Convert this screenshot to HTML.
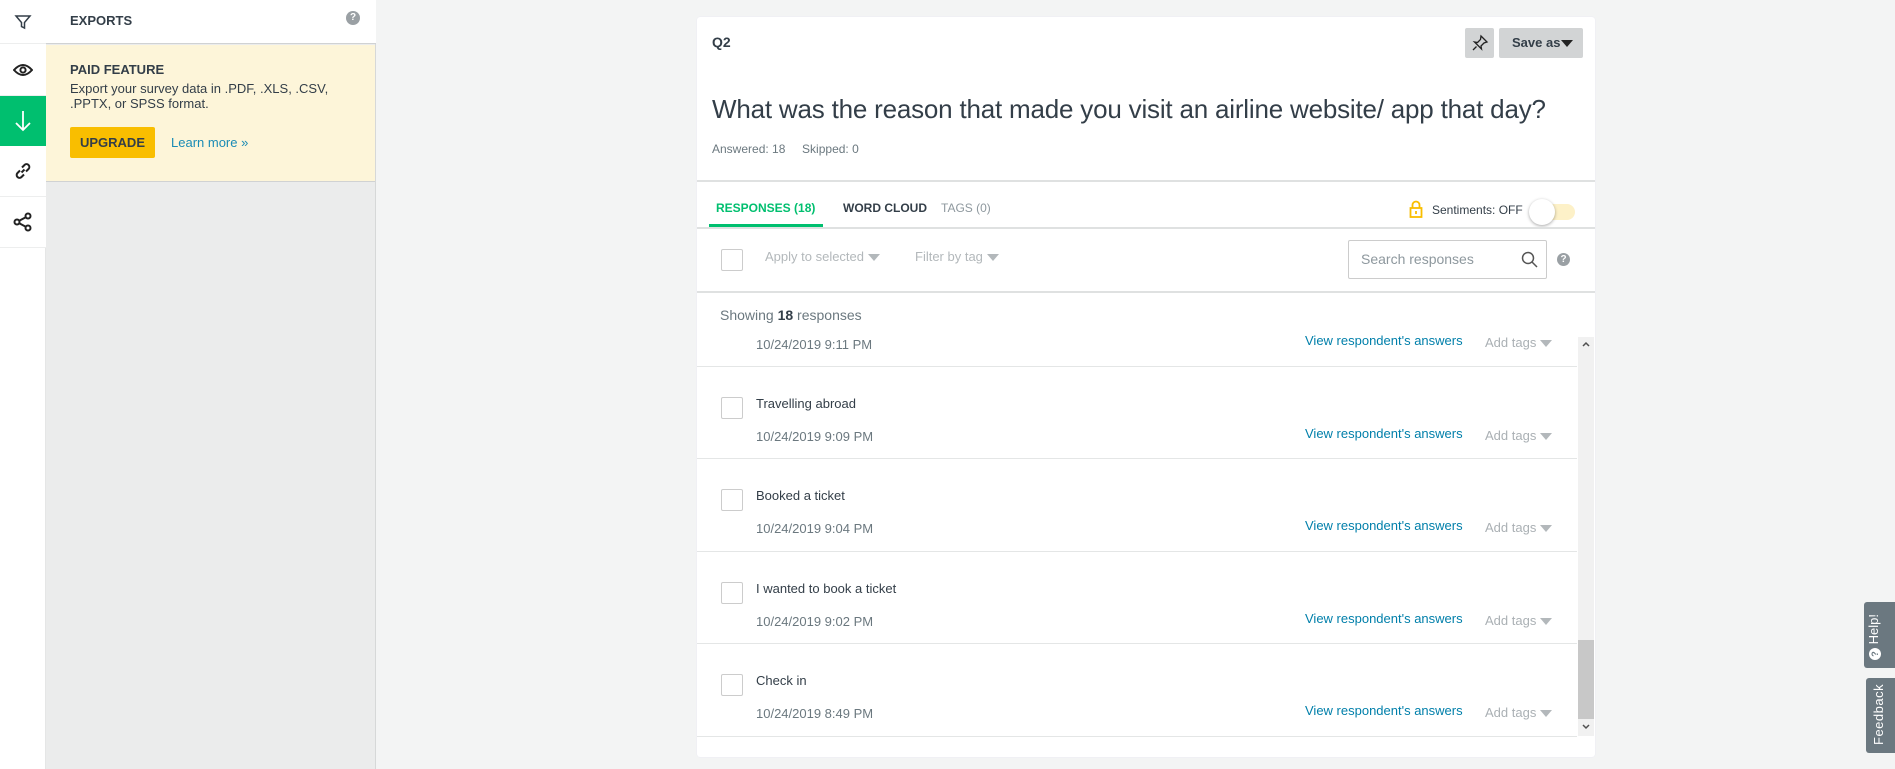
<!DOCTYPE html>
<html><head><meta charset="utf-8"><style>
*{margin:0;padding:0;box-sizing:border-box}
body{width:1895px;height:769px;overflow:hidden;background:#f3f4f4;font-family:"Liberation Sans",sans-serif;color:#333e48;position:relative}
.a{position:absolute}
.ib{position:absolute;left:0;width:46px;background:#fff;border-bottom:1px solid #edeeee;display:flex;align-items:center;justify-content:center}
.sep{position:absolute;left:697px;width:880px;height:1px;background:#e4e6e6}
.cb{position:absolute;width:22px;height:22px;border:1px solid #ccc;border-radius:2px;background:#fff}
.txt{position:absolute;left:756px;font-size:13px;color:#333e48}
.dt{position:absolute;left:756px;font-size:13px;color:#6b787f}
.vr{position:absolute;left:1305px;font-size:13px;color:#007faa}
.at{position:absolute;left:1485px;font-size:13px;color:#aab0b4}
.tri{display:inline-block;width:0;height:0;border-left:6px solid transparent;border-right:6px solid transparent;border-top:7px solid #b3b8bb;vertical-align:middle;margin-left:4px}
</style></head><body>
<div class="a" style="left:0;top:0;width:46px;height:769px;background:#fff;border-right:1px solid #e5e6e6"></div>
<div class="ib" style="top:0;height:44px"><svg width="18" height="18" viewBox="0 0 18 18" fill="none" stroke="#333e48" stroke-width="1.5"><path d="M2 3h14l-5.5 6.5V15l-3-1.5V9.5z"/></svg></div>
<div class="ib" style="top:44px;height:52px"><svg width="20" height="14" viewBox="0 0 20 14" fill="none" stroke="#222" stroke-width="2"><path d="M1 7Q10 -3 19 7Q10 17 1 7z"/><circle cx="10" cy="7" r="2.6"/></svg></div>
<div class="ib" style="top:96px;height:50px;background:#00bf6f;border:none"><svg width="18" height="22" viewBox="0 0 18 22" fill="none" stroke="#fff" stroke-width="1.8"><path d="M9 1v19M2 13l7 7 7-7"/></svg></div>
<div class="ib" style="top:146px;height:51px"><svg width="20" height="20" viewBox="0 0 20 20" fill="none" stroke="#222" stroke-width="2"><path d="M8.5 11.5l3-3"/><path d="M7 9.5L4.5 12a2.8 2.8 0 0 0 4 4L11 13.5"/><path d="M9 6.5L11.5 4a2.8 2.8 0 0 1 4 4L13 10.5"/></svg></div>
<div class="ib" style="top:197px;height:51px"><svg width="20" height="20" viewBox="0 0 20 20" fill="none" stroke="#222" stroke-width="2"><circle cx="4" cy="10" r="2.5"/><circle cx="15" cy="4" r="2.5"/><circle cx="15" cy="16" r="2.5"/><path d="M6.2 8.8l6.6-3.6M6.2 11.2l6.6 3.6"/></svg></div>
<div class="a" style="left:46px;top:0;width:330px;height:769px;background:#ebecec;border-right:1px solid #d6d8d8"></div>
<div class="a" style="left:46px;top:0;width:330px;height:44px;background:#fff;border-bottom:1px solid #d0d2d3"></div>
<div class="a" style="left:70px;top:13px;font-size:13px;font-weight:bold;color:#333e48">EXPORTS</div>
<div class="a" style="left:346px;top:11px;width:14px;height:14px;border-radius:50%;background:#9aa0a4;color:#fff;font-size:10px;font-weight:bold;text-align:center;line-height:14px">?</div>
<div class="a" style="left:46px;top:45px;width:329px;height:137px;background:#fdf5d9;border-bottom:1px solid #d0d2d3"></div>
<div class="a" style="left:70px;top:62px;font-size:13px;font-weight:bold">PAID FEATURE</div>
<div class="a" style="left:70px;top:81px;font-size:13px;line-height:15px;width:270px">Export your survey data in .PDF, .XLS, .CSV, .PPTX, or SPSS format.</div>
<div class="a" style="left:70px;top:127px;width:85px;height:31px;background:#f9be00;border-radius:2px;font-size:13px;font-weight:bold;text-align:center;line-height:31px">UPGRADE</div>
<div class="a" style="left:171px;top:135px;font-size:13px;color:#1a8bb5">Learn more »</div>
<div class="a" style="left:697px;top:17px;width:898px;height:740px;background:#fff;border-radius:3px;box-shadow:0 0 1px #dde"></div>
<div class="a" style="left:712px;top:34px;font-size:14px;font-weight:bold">Q2</div>
<div class="a" style="left:1465px;top:28px;width:29px;height:30px;background:#d2d4d5;border-radius:2px;display:flex;align-items:center;justify-content:center"><svg width="18" height="18" viewBox="0 0 18 18" fill="none" stroke="#222" stroke-width="1.3"><path d="M10 2l6 6-3 1-3 3 .5 3-7-7 3 .5 3-3z"/><path d="M5.5 12.5L2 16"/></svg></div>
<div class="a" style="left:1499px;top:28px;width:84px;height:30px;background:#d2d4d5;border-radius:2px;font-size:13px;font-weight:bold;line-height:30px;padding-left:13px">Save as<span style="display:inline-block;border-left:6px solid transparent;border-right:6px solid transparent;border-top:7px solid #222;vertical-align:middle;margin-left:1px"></span></div>
<div class="a" style="left:712px;top:94px;font-size:26px;color:#333e48;letter-spacing:-0.2px">What was the reason that made you visit an airline website/ app that day?</div>
<div class="a" style="left:712px;top:142px;font-size:12px;color:#6b787f">Answered: 18 &nbsp;&nbsp;&nbsp; Skipped: 0</div>
<div class="sep" style="top:180px;width:898px;height:2px;background:#dfe1e1"></div>
<div class="a" style="left:716px;top:201px;font-size:12px;font-weight:bold;color:#00bf6f">RESPONSES (18)</div>
<div class="a" style="left:709px;top:224px;width:114px;height:3px;background:#00bf6f"></div>
<div class="a" style="left:843px;top:201px;font-size:12px;font-weight:bold">WORD CLOUD</div>
<div class="a" style="left:941px;top:201px;font-size:12px;color:#8e989e">TAGS (0)</div>
<svg class="a" style="left:1409px;top:200px" width="14" height="18" viewBox="0 0 14 18" fill="none" stroke="#f9be00" stroke-width="1.8"><path d="M3.5 8V5a3.5 3.5 0 0 1 7 0v3"/><rect x="1.5" y="8" width="11" height="9"/><path d="M7 11v3"/></svg>
<div class="a" style="left:1432px;top:203px;font-size:12px">Sentiments: OFF</div>
<div class="a" style="left:1533px;top:204px;width:42px;height:16px;border-radius:8px;background:#fdf1c8"></div>
<div class="a" style="left:1529px;top:199px;width:26px;height:26px;border-radius:50%;background:#fff;box-shadow:0 1px 3px rgba(0,0,0,.35)"></div>
<div class="sep" style="top:227px;width:898px;height:2px;background:#dfe1e1"></div>
<div class="cb" style="left:721px;top:249px"></div>
<div class="a" style="left:765px;top:249px;font-size:13px;color:#b3b8bb">Apply to selected<span class="tri"></span></div>
<div class="a" style="left:915px;top:249px;font-size:13px;color:#b3b8bb">Filter by tag<span class="tri"></span></div>
<div class="a" style="left:1348px;top:240px;width:199px;height:39px;border:1px solid #ccc;border-radius:2px;font-size:14px;color:#8e989e;line-height:37px;padding-left:12px">Search responses</div>
<svg class="a" style="left:1521px;top:251px" width="17" height="17" viewBox="0 0 17 17" fill="none" stroke="#555" stroke-width="1.5"><circle cx="7" cy="7" r="5.5"/><path d="M11 11l5 5"/></svg>
<div class="a" style="left:1557px;top:253px;width:13px;height:13px;border-radius:50%;background:#9aa0a4;color:#fff;font-size:10px;font-weight:bold;text-align:center;line-height:13px">?</div>
<div class="sep" style="top:291px;width:898px;height:2px;background:#dfe1e1"></div>
<div class="a" style="left:720px;top:307px;font-size:14px;color:#6b787f">Showing <b style="color:#333e48">18</b> responses</div>
<div class="dt" style="top:337px">10/24/2019 9:11 PM</div>
<div class="vr" style="top:333px">View respondent's answers</div>
<div class="at" style="top:335px">Add tags<span class="tri"></span></div>
<div class="sep" style="top:366px"></div>
<div class="cb" style="left:721px;top:397px"></div>
<div class="txt" style="top:396px">Travelling abroad</div>
<div class="dt" style="top:429px">10/24/2019 9:09 PM</div>
<div class="vr" style="top:426px">View respondent's answers</div>
<div class="at" style="top:428px">Add tags<span class="tri"></span></div>
<div class="sep" style="top:458px"></div>
<div class="cb" style="left:721px;top:489px"></div>
<div class="txt" style="top:488px">Booked a ticket</div>
<div class="dt" style="top:521px">10/24/2019 9:04 PM</div>
<div class="vr" style="top:518px">View respondent's answers</div>
<div class="at" style="top:520px">Add tags<span class="tri"></span></div>
<div class="sep" style="top:551px"></div>
<div class="cb" style="left:721px;top:582px"></div>
<div class="txt" style="top:581px">I wanted to book a ticket</div>
<div class="dt" style="top:614px">10/24/2019 9:02 PM</div>
<div class="vr" style="top:611px">View respondent's answers</div>
<div class="at" style="top:613px">Add tags<span class="tri"></span></div>
<div class="sep" style="top:643px"></div>
<div class="cb" style="left:721px;top:674px"></div>
<div class="txt" style="top:673px">Check in</div>
<div class="dt" style="top:706px">10/24/2019 8:49 PM</div>
<div class="vr" style="top:703px">View respondent's answers</div>
<div class="at" style="top:705px">Add tags<span class="tri"></span></div>
<div class="sep" style="top:736px"></div>
<div class="a" style="left:1578px;top:337px;width:16px;height:399px;background:#f1f1f1"></div>
<div class="a" style="left:1578px;top:640px;width:16px;height:79px;background:#c8c8c8"></div>
<svg class="a" style="left:1582px;top:341px" width="8" height="6" viewBox="0 0 8 6" fill="none" stroke="#505050" stroke-width="1.5"><path d="M1 5l3-3 3 3"/></svg>
<svg class="a" style="left:1582px;top:724px" width="8" height="6" viewBox="0 0 8 6" fill="none" stroke="#505050" stroke-width="1.5"><path d="M1 1l3 3 3-3"/></svg>
<div class="a" style="left:1864px;top:602px;width:31px;height:66px;background:#6b7880;border-radius:3px 0 0 3px"></div>
<div class="a" style="left:1866px;top:660px;transform:rotate(-90deg);transform-origin:0 0;color:#fff;font-size:13px;white-space:nowrap"><span style="display:inline-block;width:12px;height:12px;border-radius:50%;background:#fff;color:#6b7880;font-size:9px;font-weight:bold;text-align:center;line-height:12px;vertical-align:middle">?</span> Help!</div>
<div class="a" style="left:1866px;top:678px;width:29px;height:75px;background:#6b7880;border-radius:3px 0 0 3px"></div>
<div class="a" style="left:1871px;top:745px;transform:rotate(-90deg);transform-origin:0 0;color:#fff;font-size:13px;white-space:nowrap;letter-spacing:0.5px">Feedback</div>
</body></html>
